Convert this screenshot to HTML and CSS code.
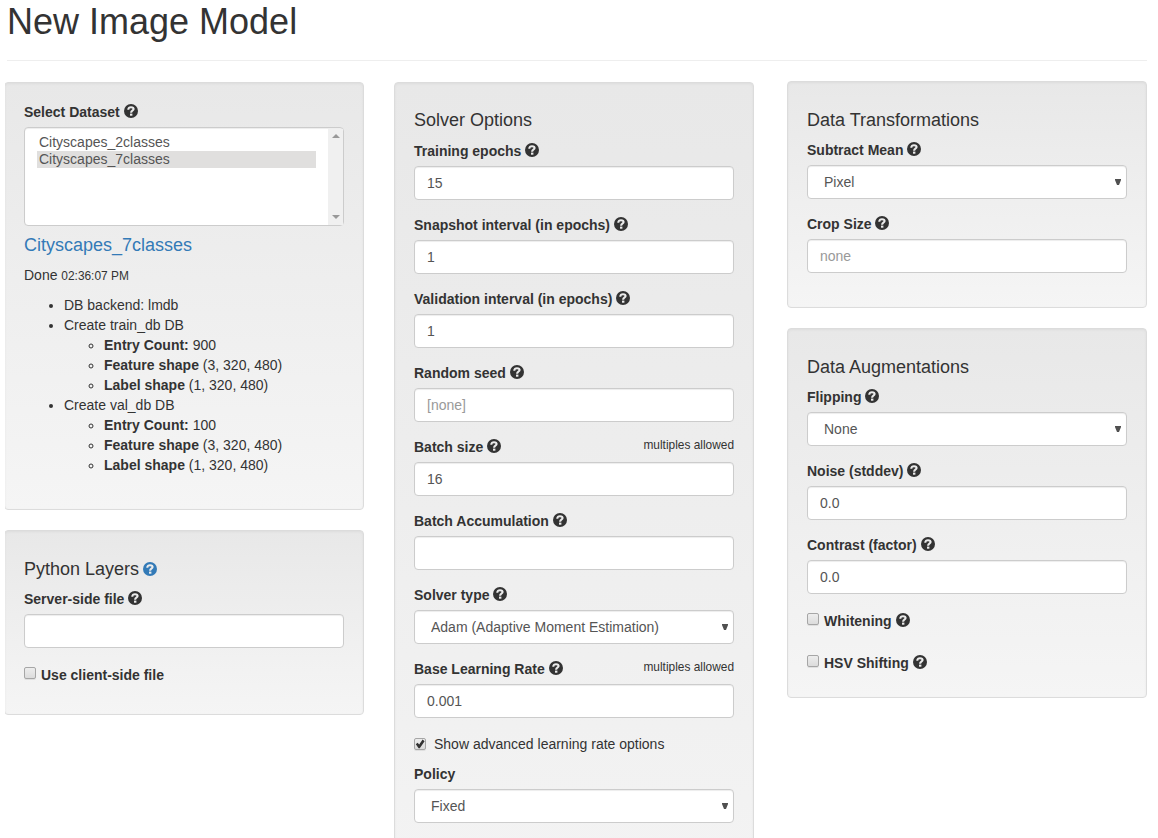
FILE: index.html
```html
<!DOCTYPE html>
<html lang="en">
<head>
<meta charset="utf-8">
<title>New Image Model</title>
<link rel="stylesheet" href="styles.css">
</head>
<body>
<svg class="defs" width="0" height="0" aria-hidden="true">
  <symbol id="help" viewBox="0 0 14 14">
    <circle class="disc" cx="7" cy="7" r="7"/>
    <path class="hook" d="M4.3 5.7C4.3 3.8 5.4 3.2 7 3.2s2.6.7 2.6 1.9c0 1.6-2.4 1.5-2.4 3.1v.5"/>
    <path class="dot" d="M6 9.6h2.4v2.1H6z"/>
  </symbol>
  <symbol id="caret" viewBox="0 0 6 6"><path d="M0 0h6v1L4 6H2L0 1z"/></symbol>
</svg>
<header class="page-header"><h1>New Image Model</h1></header>
<main class="row">
  <div class="col">
    <section class="well well-dataset">
      <div class="label">Select Dataset <svg class="help"><use href="#help"/></svg></div>
      <div class="listbox">
        <div class="options">
          <div class="option">Cityscapes_2classes</div>
          <div class="option selected">Cityscapes_7classes</div>
        </div>
        <div class="scrollbar">
          <svg width="8" height="4"><path d="M0 4L4 0l4 4z"/></svg>
          <svg width="8" height="4"><path d="M0 0h8L4 4z"/></svg>
        </div>
      </div>
      <h4 class="dataset-name"><a>Cityscapes_7classes</a></h4>
      <p class="status">Done <small>02:36:07 PM</small></p>
      <ul class="jobs">
        <li>DB backend: lmdb</li>
        <li>Create train_db DB
          <ul>
            <li><b>Entry Count:</b> 900</li>
            <li><b>Feature shape</b> (3, 320, 480)</li>
            <li><b>Label shape</b> (1, 320, 480)</li>
          </ul>
        </li>
        <li>Create val_db DB
          <ul>
            <li><b>Entry Count:</b> 100</li>
            <li><b>Feature shape</b> (3, 320, 480)</li>
            <li><b>Label shape</b> (1, 320, 480)</li>
          </ul>
        </li>
      </ul>
    </section>
    <section class="well well-python">
      <h4>Python Layers <svg class="help link"><use href="#help"/></svg></h4>
      <div class="group"><div class="label">Server-side file <svg class="help"><use href="#help"/></svg></div><input class="control" type="text"></div>
      <label class="check"><input type="checkbox">Use client-side file</label>
    </section>
  </div>
  <div class="col">
    <section class="well well-solver">
      <h4>Solver Options</h4>
      <div class="group"><div class="label">Training epochs <svg class="help"><use href="#help"/></svg></div><input class="control" type="text" value="15"></div>
      <div class="group"><div class="label">Snapshot interval (in epochs) <svg class="help"><use href="#help"/></svg></div><input class="control" type="text" value="1"></div>
      <div class="group"><div class="label">Validation interval (in epochs) <svg class="help"><use href="#help"/></svg></div><input class="control" type="text" value="1"></div>
      <div class="group"><div class="label">Random seed <svg class="help"><use href="#help"/></svg></div><input class="control" type="text" placeholder="[none]"></div>
      <div class="group"><div class="label">Batch size <svg class="help"><use href="#help"/></svg><small>multiples allowed</small></div><input class="control" type="text" value="16"></div>
      <div class="group"><div class="label">Batch Accumulation <svg class="help"><use href="#help"/></svg></div><input class="control" type="text"></div>
      <div class="group"><div class="label">Solver type <svg class="help"><use href="#help"/></svg></div><div class="select"><select class="control"><option>Adam (Adaptive Moment Estimation)</option></select><svg class="caret"><use href="#caret"/></svg></div></div>
      <div class="group"><div class="label">Base Learning Rate <svg class="help"><use href="#help"/></svg><small>multiples allowed</small></div><input class="control" type="text" value="0.001"></div>
      <label class="advanced"><input type="checkbox" checked>Show advanced learning rate options</label>
      <div class="group"><div class="label">Policy</div><div class="select"><select class="control"><option>Fixed</option></select><svg class="caret"><use href="#caret"/></svg></div></div>
    </section>
  </div>
  <div class="col col-data">
    <section class="well">
      <h4>Data Transformations</h4>
      <div class="group"><div class="label">Subtract Mean <svg class="help"><use href="#help"/></svg></div><div class="select"><select class="control"><option>Pixel</option></select><svg class="caret"><use href="#caret"/></svg></div></div>
      <div class="group"><div class="label">Crop Size <svg class="help"><use href="#help"/></svg></div><input class="control" type="text" placeholder="none"></div>
    </section>
    <section class="well">
      <h4>Data Augmentations</h4>
      <div class="group"><div class="label">Flipping <svg class="help"><use href="#help"/></svg></div><div class="select"><select class="control"><option>None</option></select><svg class="caret"><use href="#caret"/></svg></div></div>
      <div class="group"><div class="label">Noise (stddev) <svg class="help"><use href="#help"/></svg></div><input class="control" type="text" value="0.0"></div>
      <div class="group"><div class="label">Contrast (factor) <svg class="help"><use href="#help"/></svg></div><input class="control" type="text" value="0.0"></div>
      <label class="check spaced"><input type="checkbox">Whitening <svg class="help"><use href="#help"/></svg></label>
      <label class="check"><input type="checkbox">HSV Shifting <svg class="help"><use href="#help"/></svg></label>
    </section>
  </div>
</main>
</body>
</html>
```

FILE: styles.css
```css
* { box-sizing: border-box; }
html { overflow: hidden; }
body {
  margin: 0;
  height: 838px;
  overflow: hidden;
  background: #fff;
  color: #333;
  font: 14px/20px "Liberation Sans", Arial, sans-serif;
}
.defs { position: absolute; }
.page-header {
  margin: 0 11px 21px 7px;
  height: 61px;
  padding-top: 2px;
  border-bottom: 1px solid #eee;
}
h1 { margin: 0; font-size: 36px; line-height: 40px; font-weight: 400; }
h4 { margin: 9px 0 10px; font-size: 18px; line-height: 20px; font-weight: 400; }
a { color: #337ab7; }
small { font-size: 11.9px; line-height: 1; font-weight: 400; }

.row { display: flex; gap: 30px; height: 756px; padding-left: 4px; align-items: flex-start; }
.col { width: 360px; flex: none; }
.col-data { margin: -1px 0 0 3px; }
.well {
  margin-bottom: 20px;
  padding: 19px;
  border: 1px solid #dcdcdc;
  border-radius: 4px;
  background: linear-gradient(#e8e8e8, #f5f5f5);
  box-shadow: inset 0 1px 3px rgba(0, 0, 0, .05);
}
.well-dataset { height: 428px; clip-path: inset(0 0 0 1px); }
.well-python { height: 185px; clip-path: inset(0 0 0 1px); }
.well-solver { height: 930px; }
.well-solver h4 { margin: 8px 0 11px; }

.group { margin-bottom: 15px; }
.label { height: 20px; margin-bottom: 5px; font-weight: 700; }
.label small { float: right; line-height: 17px; }
.help {
  width: 14px;
  height: 14px;
  vertical-align: -1px;
  color: #333;
}
.help.link { margin-left: -1px; color: #337ab7; }
.disc { fill: currentColor; }
.hook { fill: none; stroke: #ececec; stroke-width: 2.1; }
.dot { fill: #ececec; }

.control {
  display: block;
  width: 100%;
  height: 34px;
  margin: 0;
  padding: 6px 12px;
  border: 1px solid #ccc;
  border-radius: 4px;
  background: #fff;
  color: #555;
  font: inherit;
  box-shadow: inset 0 1px 1px rgba(0, 0, 0, .075);
  appearance: none;
}
.control::placeholder { color: #999; opacity: 1; }
.select { position: relative; }
.select .control { padding-left: 16px; }
.caret {
  position: absolute;
  right: 6px;
  top: 14px;
  width: 6px;
  height: 6px;
  fill: #505050;
}

.listbox {
  display: flex;
  height: 99px;
  border: 1px solid #ccc;
  border-radius: 4px;
  background: #fff;
  color: #555;
  box-shadow: inset 0 1px 1px rgba(0, 0, 0, .075);
}
.options { flex: 1; padding: 6px 12px; }
.option { height: 17px; padding-left: 2px; line-height: 17px; }
.option.selected { background: #e0dfde; }
.scrollbar {
  display: flex;
  flex-direction: column;
  justify-content: space-between;
  align-items: center;
  width: 15px;
  margin-top: 1px;
  padding: 5px 0 6px;
  background: #f0f0f0;
  fill: #999;
}

.dataset-name { margin-bottom: 10px; }
.status { height: 20px; margin: 0 0 10px; }
.jobs, .jobs ul { margin: 0; padding-left: 40px; }

.check { display: flex; align-items: center; height: 27px; padding: 2px 0 5px; font-weight: 700; white-space: pre; }
.check.spaced { margin-bottom: 15px; }
.check .help { position: relative; top: -1px; }
.advanced { display: flex; align-items: center; height: 20px; margin: 16px 0 10px; }
input[type="checkbox"] {
  appearance: none;
  width: 12px;
  height: 12px;
  margin: 0 5px 4px 0;
  border: 1px solid #a6a6a6;
  border-radius: 2px;
  background: linear-gradient(#ededed, #dcdcdc);
  box-shadow: 0 1px 0 rgba(0, 0, 0, .08);
}
.advanced input[type="checkbox"] { position: relative; margin: 0 8px 0 0; }
.advanced input::after {
  content: "";
  position: absolute;
  inset: 0;
  background: #333;
  clip-path: polygon(8% 52%, 26% 38%, 42% 55%, 76% 6%, 96% 22%, 48% 92%, 36% 92%);
}
```
